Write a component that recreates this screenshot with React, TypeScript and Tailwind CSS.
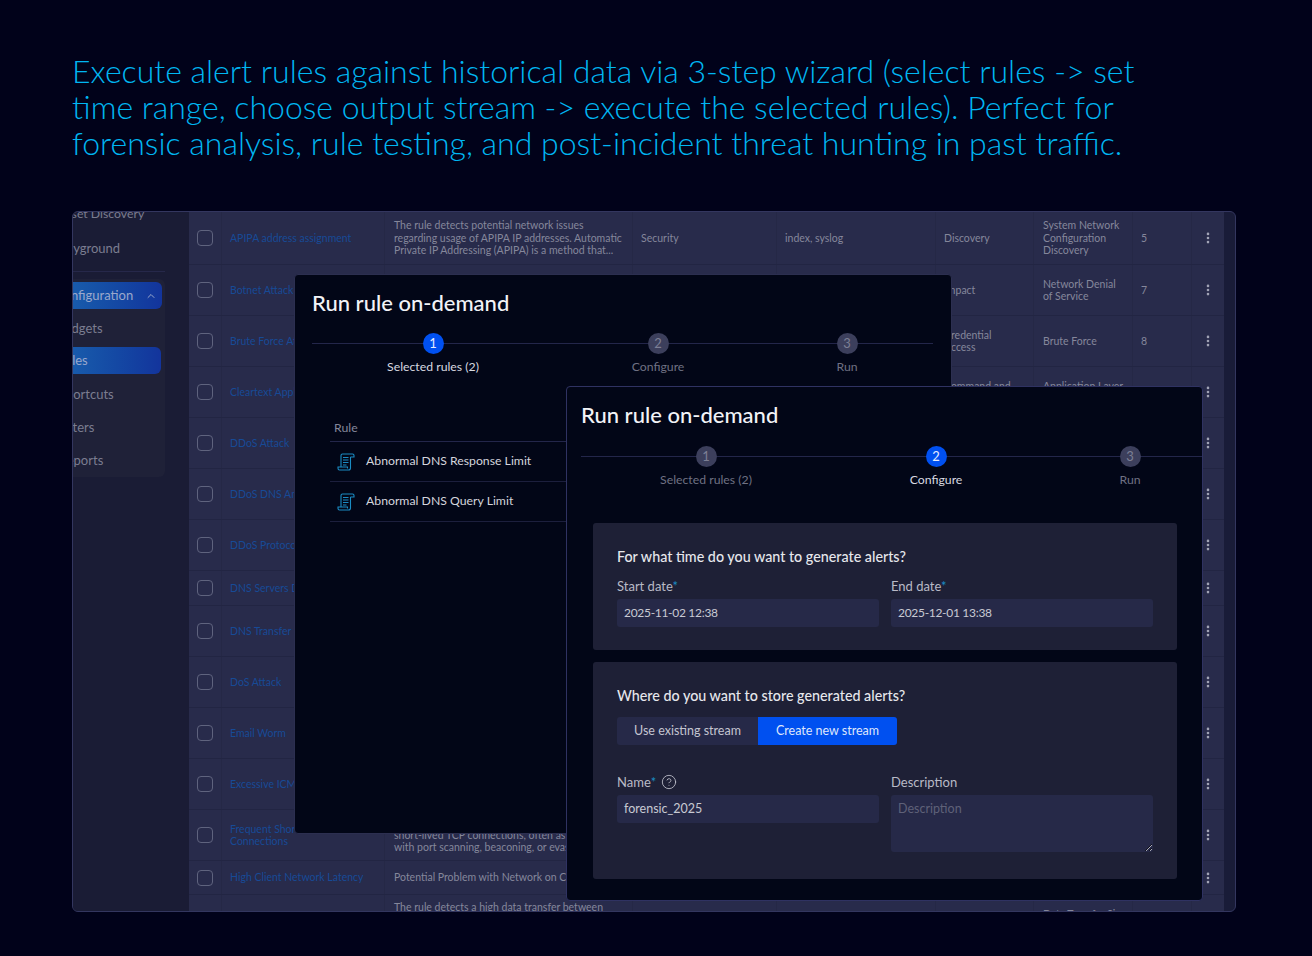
import { ChevronUp, CircleHelp, EllipsisVertical } from 'lucide-react'

const rows = [
  { name: 'APIPA address assignment', desc: 'The rule detects potential network issues\nregarding usage of APIPA IP addresses. Automatic\nPrivate IP Addressing (APIPA) is a method that...', cat: 'Security', tags: 'index, syslog', tactic: 'Discovery', tech: 'System Network Configuration Discovery', n: '5', h: 'h-[53px]' },
  { name: 'Botnet Attack', desc: '', cat: '', tags: '', tactic: 'Impact', tech: 'Network Denial of Service', n: '7', h: 'h-[51px]' },
  { name: 'Brute Force Attack', desc: '', cat: '', tags: '', tactic: 'Credential\nAccess', tech: 'Brute Force', n: '8', h: 'h-[51px]' },
  { name: 'Cleartext Application', desc: '', cat: '', tags: '', tactic: 'Command and Control', tech: 'Application Layer Protocol', n: '', h: 'h-[51px]' },
  { name: 'DDoS Attack', desc: '', cat: '', tags: '', tactic: '', tech: '', n: '', h: 'h-[51px]' },
  { name: 'DDoS DNS Amplification', desc: '', cat: '', tags: '', tactic: '', tech: '', n: '', h: 'h-[51px]' },
  { name: 'DDoS Protocol', desc: '', cat: '', tags: '', tactic: '', tech: '', n: '', h: 'h-[51px]' },
  { name: 'DNS Servers Down', desc: '', cat: '', tags: '', tactic: '', tech: '', n: '', h: 'h-[35px]' },
  { name: 'DNS Transfer', desc: '', cat: '', tags: '', tactic: '', tech: '', n: '', h: 'h-[51px]' },
  { name: 'DoS Attack', desc: '', cat: '', tags: '', tactic: '', tech: '', n: '', h: 'h-[51px]' },
  { name: 'Email Worm', desc: '', cat: '', tags: '', tactic: '', tech: '', n: '', h: 'h-[51px]' },
  { name: 'Excessive ICMP', desc: '', cat: '', tags: '', tactic: '', tech: '', n: '', h: 'h-[51px]' },
  { name: 'Frequent Short\nConnections', desc: 'The rule detects hosts opening many\nshort-lived TCP connections, often associated\nwith port scanning, beaconing, or evasion', cat: '', tags: '', tactic: '', tech: '', n: '', h: 'h-[51px]' },
  { name: 'High Client Network Latency', desc: 'Potential Problem with Network on Client', cat: '', tags: '', tactic: '', tech: '', n: '', h: 'h-[34px]' },
  { name: '', desc: 'The rule detects a high data transfer between\nhosts on the network and external\ndestinations', cat: '', tags: '', tactic: '', tech: 'Data Transfer Size Limits', n: '', h: 'h-[51px]' },
]

function ScrollIcon() {
  return (
    <svg width="18" height="18" viewBox="0 0 18 18" fill="none" stroke="#1a8cc4" strokeWidth="1.1" className="shrink-0">
      <path d="M4 14V2.5C4 1.5 4.6 1 5.5 1H15.5C16.5 1 17 1.7 17 2.5V4H13.5" />
      <path d="M13.5 4V15C13.5 16.2 12.7 17 11.5 17H2.5C1.4 17 1 16.2 1 15.2V14H10.5V15.5" />
      <path d="M6 4.5H11.5M6 7H11.5M6 9.5H11.5M6 12H9.5" />
    </svg>
  )
}

function Step({ num, label, active, className }: { num: string; label: string; active?: boolean; className: string }) {
  return (
    <div className={`absolute top-0 flex w-[160px] -translate-x-1/2 flex-col items-center ${className}`}>
      <div className={`flex h-[21px] w-[21px] items-center justify-center rounded-full text-[13px] ${active ? 'bg-[#0050f0] text-[#e6ecff]' : 'bg-[#3c3f5c] text-[#7d7f95]'}`}>
        {num}
      </div>
      <div className={`mt-[5px] text-[12.25px] leading-[16px] ${active ? 'text-[#d8d9e0]' : 'text-[#6f7183]'}`}>{label}</div>
    </div>
  )
}

function Field({ label, value, star }: { label: string; value: string; star?: boolean }) {
  return (
    <div className="flex-1">
      <div className="text-[13px] leading-[16px] text-[#b9bac6]">
        {label}
        {star && <span className="text-[#1a8cc4]">*</span>}
      </div>
      <div className="mt-[5px] flex h-[28px] items-center rounded-[3px] bg-[#262948] px-[7px] text-[12px] tracking-[-0.3px] text-[#c8c9d3]">{value}</div>
    </div>
  )
}

export default function App() {
  return (
    <div className="h-[956px] overflow-hidden bg-[#01021a] px-[72px] pt-[53px] font-['Lato',sans-serif]">
      <h1 className="w-[1080px] text-[32px] font-light leading-[36px] text-[#00b6f2]">
        Execute alert rules against historical data via 3-step wizard (select rules -&gt; set time range, choose output stream -&gt; execute the selected rules). Perfect for forensic analysis, rule testing, and post-incident threat hunting in past traffic.
      </h1>

      <div className="relative mt-[50px] flex h-[701px] w-[1164px] overflow-hidden rounded-[6px] border border-[#33365f] bg-[#191c38]">
        {/* Sidebar */}
        <div className="w-[116px] shrink-0 overflow-hidden bg-[#1a1c35]">
          <div className="-mt-[8px] -ml-[18px] text-[13px] text-[#7b7d90]">
            <div className="flex h-[20px] items-center pl-[3px] text-[12.25px]">Asset Discovery</div>
            <div className="mt-[15px] flex h-[20px] items-center pl-[1px]">Playground</div>
            <div className="mt-[12px] ml-[18px] h-px w-[92px] bg-[#26284a]" />
            <div className="mt-[7px] ml-[18px] h-[198px] w-[92px] rounded-r-[6px] bg-[#1f2138] pr-[3px] pt-[3px]">
              <div className="-ml-[18px] flex h-[27px] items-center justify-between rounded-r-[6px] bg-gradient-to-r from-[#1b62ae] to-[#13349c] pr-[5px] text-[#9aa8cc]">
                <span>Configuration</span>
                <ChevronUp size={12} />
              </div>
              <div className="-ml-[18px] mt-[11px] leading-[16px]">Widgets</div>
              <div className="mt-[11px] -ml-[18px] mr-[1px] flex h-[27px] items-center rounded-r-[6px] bg-gradient-to-r from-[#1b62ae] to-[#13349c] text-[#9aa8cc]">
                <span className="ml-[2px]">Rules</span>
              </div>
              <div className="-ml-[14px] mt-[12px] leading-[16px]">Shortcuts</div>
              <div className="-ml-[14px] mt-[17px] leading-[16px]">Filters</div>
              <div className="-ml-[14px] mt-[17px] leading-[16px]">Reports</div>
            </div>
          </div>
        </div>

        {/* Table behind the dialogs */}
        <div className="w-[1035px] shrink-0">
          {rows.map((r, i) => (
            <div
              key={i}
              className={`grid shrink-0 grid-cols-[33px_163px_248px_144px_159px_98px_99px_59px_32px] border-b border-[#222543] bg-[#282b4b] text-[10.5px] leading-[12.5px] text-[#85879b] ${r.h}`}
            >
              <div className="flex items-center justify-center border-r border-[#252846]">
                <div className="h-[16px] w-[16px] rounded-[4px] border-[1.5px] border-[#5f637e]" />
              </div>
              <div className="flex items-center whitespace-pre-line border-r border-[#252846] pl-[8px] pr-[6px] text-[#174a96]">{r.name}</div>
              <div className="flex items-center whitespace-pre-line border-r border-[#252846] pl-[9px]">{r.desc}</div>
              <div className="flex items-center border-r border-[#252846] pl-[8px]">{r.cat}</div>
              <div className="flex items-center border-r border-[#252846] pl-[8px]">{r.tags}</div>
              <div className="flex items-center whitespace-pre-line border-r border-[#252846] pl-[8px] pr-[6px]">{r.tactic}</div>
              <div className="flex items-center border-r border-[#252846] pl-[9px] pr-[6px]">{r.tech}</div>
              <div className="flex items-center border-r border-[#252846] pl-[8px]">{r.n}</div>
              <div className="flex items-center justify-center">
                <EllipsisVertical size={14} strokeWidth={2.5} className="text-[#a2a4b6]" />
              </div>
            </div>
          ))}
        </div>

        {/* First dialog */}
        <div className="absolute left-[221px] top-[62px] h-[560px] w-[658px] rounded-[4px] border border-[#2c2f50] bg-[#020617] pl-[17px]">
          <div className="pt-[13px] text-[22px] font-medium leading-[30px] text-[#f2f3f7]">Run rule on-demand</div>
          <div className="relative mt-[15px] h-[46px]">
            <div className="absolute left-0 top-[10px] h-px w-[621px] bg-[#23264a]" />
            <Step num="1" label="Selected rules (2)" active className="left-[121px]" />
            <Step num="2" label="Configure" className="left-[346px]" />
            <Step num="3" label="Run" className="left-[535px]" />
          </div>
          <div className="ml-[18px] mt-[35px] w-[400px] text-[12.25px] text-[#d4d5dd]">
            <div className="flex h-[28px] items-center border-b border-[#23264a] pl-[4px] pt-[2px] text-[#85879b]">Rule</div>
            <div className="flex h-[40px] items-center gap-[11px] border-b border-[#1c1f3d] pl-[7px]">
              <ScrollIcon />
              Abnormal DNS Response Limit
            </div>
            <div className="flex h-[40px] items-center gap-[11px] border-b border-[#1c1f3d] pl-[7px]">
              <ScrollIcon />
              Abnormal DNS Query Limit
            </div>
          </div>
        </div>

        {/* Second dialog */}
        <div className="absolute left-[493px] top-[174px] h-[515px] w-[637px] rounded-[4px] border border-[#2f3262] bg-[#020617]">
          <div className="pl-[14px] pt-[13px] text-[22px] font-medium leading-[30px] text-[#f2f3f7]">Run rule on-demand</div>
          <div className="relative ml-[14px] mt-[16px] h-[46px]">
            <div className="absolute left-0 top-[10px] h-px w-[621px] bg-[#23264a]" />
            <Step num="1" label="Selected rules (2)" className="left-[125px]" />
            <Step num="2" label="Configure" active className="left-[355px]" />
            <Step num="3" label="Run" className="left-[549px]" />
          </div>
          <div className="ml-[26px] mt-[31px] w-[584px] space-y-[12px]">
            <div className="h-[127px] rounded-[3px] bg-[#1e2036] px-[24px] pt-[26px]">
              <div className="text-[14.3px] font-medium leading-[16px] text-[#e6e7ec]">For what time do you want to generate alerts?</div>
              <div className="mt-[13px] flex gap-[12px]">
                <Field label="Start date" value="2025-11-02 12:38" star />
                <Field label="End date" value="2025-12-01 13:38" star />
              </div>
            </div>
            <div className="h-[217px] rounded-[3px] bg-[#1e2036] px-[24px] pt-[26px]">
              <div className="text-[14.3px] font-medium leading-[16px] text-[#e6e7ec]">Where do you want to store generated alerts?</div>
              <div className="mt-[13px] flex h-[28px] w-[280px] text-[12.5px]">
                <div className="flex w-[141px] items-center justify-center rounded-l-[3px] bg-[#262948] pt-px text-[#c4c5d0]">Use existing stream</div>
                <div className="flex w-[139px] items-center justify-center rounded-r-[3px] bg-[#0050f0] pt-px text-[#dfe6fb]">Create new stream</div>
              </div>
              <div className="mt-[29px] flex gap-[12px]">
                <div className="flex-1">
                  <div className="flex items-center text-[13px] leading-[16px] text-[#b9bac6]">
                    Name<span className="text-[#1a8cc4]">*</span>
                    <CircleHelp size={16} strokeWidth={1.25} className="ml-[5px] text-[#c4c5d0]" />
                  </div>
                  <div className="mt-[5px] flex h-[28px] items-center rounded-[3px] bg-[#262948] px-[7px] pt-px text-[12.5px] text-[#c8c9d3]">forensic_2025</div>
                </div>
                <div className="flex-1">
                  <div className="text-[13px] leading-[16px] text-[#b9bac6]">Description</div>
                  <textarea
                    readOnly
                    placeholder="Description"
                    className="mt-[5px] block h-[57px] w-full rounded-[3px] bg-[#262948] px-[7px] py-[5px] text-[12.5px] text-[#c8c9d3] outline-none placeholder:text-[#5f6178]"
                  />
                </div>
              </div>
            </div>
          </div>
        </div>
      </div>
    </div>
  )
}
